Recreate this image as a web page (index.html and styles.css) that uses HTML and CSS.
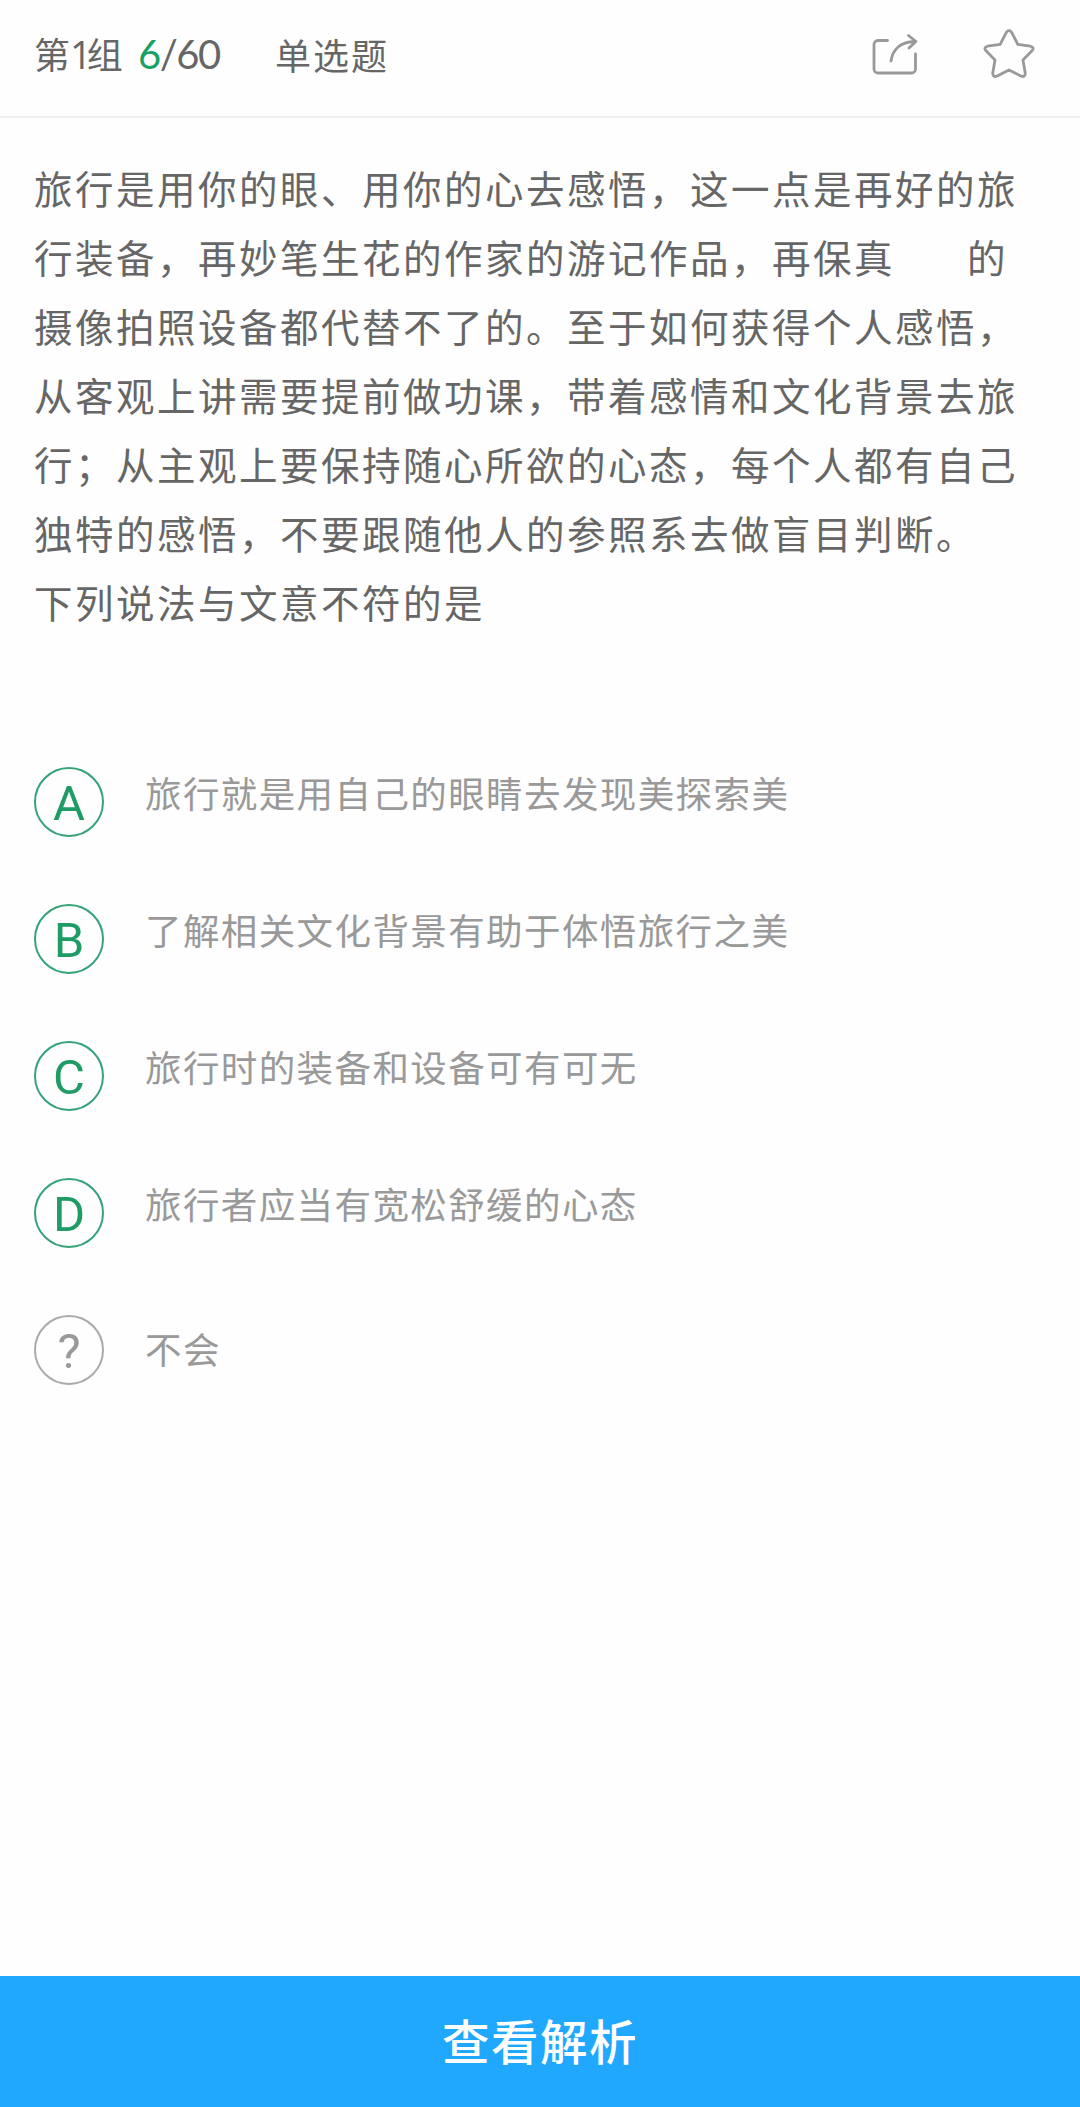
FILE: index.html
```
<!DOCTYPE html>
<html lang="zh-CN">
<head>
  <meta charset="UTF-8"/>
  <meta name="viewport" content="width=device-width, initial-scale=1.0"/>
  <title>单选题</title>
  <link rel="stylesheet" href="styles.css">
</head>
<body>
  <header class="topbar">
    <div class="group">第<span class="one">1</span>组</div>
    <div class="progress"><span class="current">6</span>/60</div>
    <div class="type">单选题</div>
    <div class="actions">
      <svg class="icon" width="52" height="52" viewBox="0 0 52 52">
        <path d="M20.500 12.500H11a4 4 0 0 0-4 4V41a4 4 0 0 0 4 4h33.500a4 4 0 0 0 4-4V26"/>
        <path d="M24 33C25.500 22 33 14 47.500 13.500M41.500 7.500L49 13.500L42 20"/>
      </svg>
      <svg class="icon" width="52" height="52" viewBox="0 0 52 52">
        <path d="M23.200 4.600Q26 .8 28.800 4.600L34.800 16.300L47.500 18.200Q51.600 19.600 49.200 22.600L40 32L42.300 45.400Q41.900 49.400 38.300 48.200L26 42L13.700 48.200Q10.100 49.400 9.700 45.400L12 32L2.800 22.600Q.4 19.600 4.500 18.200L17.200 16.300Z"/>
      </svg>
    </div>
  </header>

  <main>
    <div class="question">
      旅行是用你的眼、用你的心去感悟，这一点是再好的旅<br>
      行装备，再妙笔生花的作家的游记作品，再保真<span class="blank"></span>的<br>
      摄像拍照设备都代替不了的。至于如何获得个人感悟，<br>
      从客观上讲需要提前做功课，带着感情和文化背景去旅<br>
      行；从主观上要保持随心所欲的心态，每个人都有自己<br>
      独特的感悟，不要跟随他人的参照系去做盲目判断。<br>
      下列说法与文意不符的是
    </div>

    <ul class="options">
      <li><span class="mark">A</span><span class="text">旅行就是用自己的眼睛去发现美探索美</span></li>
      <li><span class="mark">B</span><span class="text">了解相关文化背景有助于体悟旅行之美</span></li>
      <li><span class="mark">C</span><span class="text">旅行时的装备和设备可有可无</span></li>
      <li><span class="mark">D</span><span class="text">旅行者应当有宽松舒缓的心态</span></li>
      <li class="unknown"><span class="mark">?</span><span class="text">不会</span></li>
    </ul>
  </main>

  <button class="analysis">查看解析</button>
</body>
</html>
```
FILE: styles.css
```
* { box-sizing:border-box; }
body { margin:0; height:2107px; display:flex; flex-direction:column; background:#fefefe; color:#666; font-family:"Noto Sans CJK SC",sans-serif; }

.topbar { display:flex; align-items:center; height:118px; padding:0 45px 9px 34px; border-bottom:2px solid #eee; font-size:36px; white-space:nowrap; }
.one { font-family:"Open Sans",sans-serif; font-size:38px; letter-spacing:-5px; }
.group { width:104px; }
.progress { width:137px; font-family:Lato,sans-serif; font-size:40px; letter-spacing:-1.5px; }
.type { letter-spacing:2px; }
.current { color:#16a263; }
.actions { display:flex; gap:64px; margin-left:auto; }
.icon { display:block; fill:none; stroke:#999; stroke-width:2.8; stroke-linecap:round; stroke-linejoin:round; }

main { flex:1; padding:35px 34px 0; }
.question { font-size:38.5px; line-height:69px; letter-spacing:2.5px; white-space:nowrap; }
.blank { display:inline-block; width:72px; }

.options { list-style:none; margin:131px 0 0; padding:0; }
.options li { display:flex; align-items:center; height:70px; margin-bottom:67px; color:#999; }
.mark { width:70px; height:70px; margin-right:41px; border:2px solid #35a377; border-radius:50%; color:#1f9c66; font:49px/69px Roboto,sans-serif; text-align:center; }
.text { padding-bottom:19px; font-size:36.5px; line-height:54px; letter-spacing:1.4px; }
.unknown .mark { border-color:#aaa; color:#999; }
.unknown .text { padding-bottom:3px; }

.analysis { height:131px; border:none; padding:0 0 5px; background:#20a8ff; color:#fff; font-family:inherit; font-size:47.5px; font-weight:500; letter-spacing:1.5px; cursor:pointer; }
```
